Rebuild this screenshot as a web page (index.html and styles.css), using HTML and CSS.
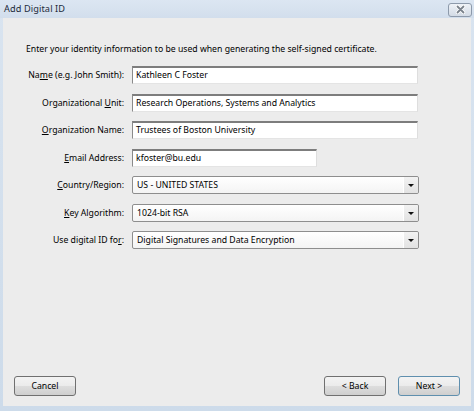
FILE: index.html
```html
<!DOCTYPE html>
<html>
<head>
<meta charset="utf-8">
<link rel="stylesheet" href="styles.css">
</head>
<body>
<div class="window">
  <div class="titlebar">
    <span class="title">Add Digital ID</span>
    <span class="close">
      <svg width="11" height="9" viewBox="0 0 11 9"><path d="M2.5 1.5 L8.5 7.5 M8.5 1.5 L2.5 7.5" stroke="#ffffff" stroke-width="3.4" stroke-linecap="round"/><path d="M2.5 1.5 L8.5 7.5 M8.5 1.5 L2.5 7.5" stroke="#7a828c" stroke-width="1.8" stroke-linecap="round"/></svg>
    </span>
  </div>
  <div class="client">
    <p class="intro">Enter your identity information to be used when generating the self-signed certificate.</p>
    <div class="form">
      <label class="lbl">Na<u>m</u>e (e.g. John Smith):</label>
      <div class="text wide">Kathleen C Foster</div>
      <label class="lbl">Organizational <u>U</u>nit:</label>
      <div class="text wide">Research Operations, Systems and Analytics</div>
      <label class="lbl"><u>O</u>rganization Name:</label>
      <div class="text wide">Trustees of Boston University</div>
      <label class="lbl"><u>E</u>mail Address:</label>
      <div class="text short">kfoster@bu.edu</div>
      <label class="lbl"><u>C</u>ountry/Region:</label>
      <div class="select"><span class="val">US - UNITED STATES</span><span class="arrow"></span></div>
      <label class="lbl"><u>K</u>ey Algorithm:</label>
      <div class="select"><span class="val">1024-bit RSA</span><span class="arrow"></span></div>
      <label class="lbl">Use digital ID fo<u>r</u>:</label>
      <div class="select"><span class="val">Digital Signatures and Data Encryption</span><span class="arrow"></span></div>
    </div>
    <div class="footer">
      <span class="btn">Cancel</span>
      <span class="grow"></span>
      <span class="btn">&lt; Back</span>
      <span class="btn default">Next &gt;</span>
    </div>
  </div>
</div>
</body>
</html>
```
FILE: styles.css
```css
html, body {
  margin: 0;
  padding: 0;
}
body {
  width: 474px;
  height: 411px;
  overflow: hidden;
  background: #ececec;
  font-family: "Noto Sans", "Open Sans", sans-serif;
  font-size: 8.7px;
  color: #000;
}
.window {
  width: 474px;
  height: 411px;
  box-sizing: border-box;
  display: flex;
  flex-direction: column;
  background: linear-gradient(#d9e4f0, #cddbea);
  padding-bottom: 5px;
}
.titlebar {
  height: 18px;
  flex: none;
  display: flex;
  align-items: center;
  padding-left: 4px;
  padding-right: 2px;
  background: linear-gradient(#dce6f2, #d2deec);
}
.title {
  flex: 1;
  color: #1c2a3a;
  font-size: 9.2px;
  line-height: 12px;
  letter-spacing: 0.1px;
}
.close {
  width: 22px;
  height: 12px;
  margin-top: 1px;
  border: 1px solid #8d9aab;
  border-radius: 3px;
  background: linear-gradient(#eef2f7, #d3dbe5);
  display: flex;
  align-items: center;
  justify-content: center;
}
.client {
  flex: 1;
  margin: 0 3px;
  background: #ececec;
  display: flex;
  flex-direction: column;
}
.intro {
  margin: 25px 0 0 23px;
  line-height: 12px;
}
.form {
  margin: 11px 0 0 23px;
  display: grid;
  grid-template-columns: 98px 1fr;
  column-gap: 8px;
  row-gap: 9.5px;
  align-items: center;
}
.lbl {
  text-align: right;
  white-space: nowrap;
  line-height: 12px;
}
.lbl u {
  text-underline-offset: 1px;
}
.text {
  height: 18px;
  box-sizing: border-box;
  background: #fff;
  border-top: 2px solid #7d7d7d;
  border-left: 1px solid #8a8a8a;
  border-right: 1px solid #dedede;
  border-bottom: 1px solid #e4e4e4;
  padding: 0 3px;
  line-height: 15px;
  white-space: nowrap;
  overflow: hidden;
}
.wide {
  width: 286px;
}
.short {
  width: 185px;
}
.select {
  width: 287px;
  height: 18px;
  box-sizing: border-box;
  border: 1px solid #8e8e8e;
  border-radius: 2px;
  background: linear-gradient(#ffffff, #f4f4f4);
  display: flex;
  align-items: center;
}
.select .val {
  flex: 1;
  padding-left: 4px;
  line-height: 16px;
}
.select .arrow {
  width: 14px;
  height: 16px;
  border-left: 1px solid #fff;
  background: linear-gradient(#f2f2f2, #e2e2e2);
  border-radius: 0 2px 2px 0;
  position: relative;
}
.select .arrow::after {
  content: "";
  position: absolute;
  left: 4px;
  top: 7px;
  border-left: 3px solid transparent;
  border-right: 3px solid transparent;
  border-top: 3px solid #111;
}
.footer {
  margin-top: auto;
  display: flex;
  gap: 12px;
  padding: 0 11px 10px 11px;
}
.grow {
  flex: 1;
}
.btn {
  width: 62px;
  height: 20px;
  box-sizing: border-box;
  border: 1px solid #707070;
  border-radius: 3px;
  background: linear-gradient(#f3f3f3 0%, #ebebeb 50%, #dddddd 51%, #cfcfcf 100%);
  display: flex;
  align-items: center;
  justify-content: center;
  line-height: 12px;
}
.btn.default {
  border-color: #5f8fae;
}
```
